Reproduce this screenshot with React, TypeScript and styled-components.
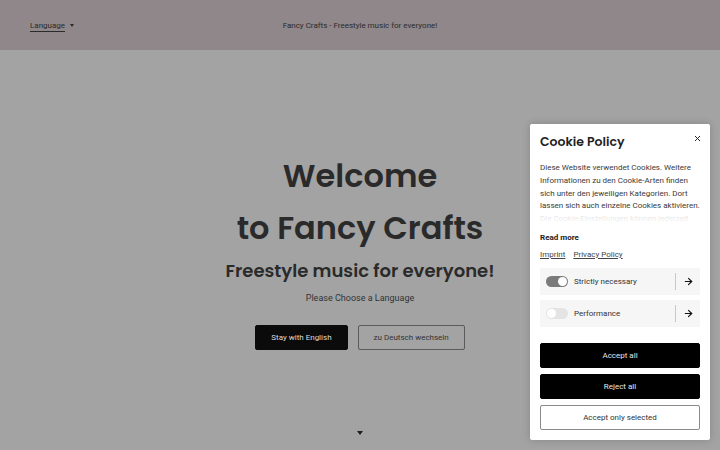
import styled, { createGlobalStyle } from "styled-components";
import { ArrowRight, X } from "lucide-react";

const GlobalStyle = createGlobalStyle`
  html, body {
    margin: 0;
    padding: 0;
    background: #a3a3a3;
    font-family: Roboto, "Liberation Sans", sans-serif;
    color: #2a2a2a;
  }
  * { box-sizing: border-box; }
`;

const Page = styled.div`
  position: relative;
  width: 720px;
  height: 450px;
  overflow: hidden;
  background: #a3a3a3;
`;

const Header = styled.header`
  display: grid;
  grid-template-columns: 1fr auto 1fr;
  align-items: center;
  height: 50px;
  padding: 0 30px;
  background: #8f878a;
  font-size: 8px;
  color: #2b2b2b;
`;

const LangPicker = styled.div`
  display: flex;
  align-items: center;
  gap: 5px;
`;

const LangLabel = styled.span`
  border-bottom: 1px solid #2b2b2b;
  padding-bottom: 1px;
  margin-top: 2px;
`;

const Caret = styled.span`
  width: 0;
  height: 0;
  border-left: 2.5px solid transparent;
  border-right: 2.5px solid transparent;
  border-top: 3px solid #2b2b2b;
`;

const Tagline = styled.div`
  text-align: center;
`;

const Hero = styled.main`
  display: flex;
  flex-direction: column;
  align-items: center;
  padding-top: 100px;
`;

const Title = styled.h1`
  margin: 0;
  font-family: Poppins, Inter, sans-serif;
  font-weight: 600;
  font-size: 32px;
  line-height: 52px;
  color: #2a2a2a;
  text-align: center;
`;

const SubTitle = styled.h2`
  margin: 4px 0 0;
  font-family: Poppins, Inter, sans-serif;
  font-weight: 600;
  font-size: 18px;
  line-height: 26px;
  color: #2a2a2a;
`;

const Prompt = styled.p`
  margin: 7px 0 0;
  font-size: 9px;
  line-height: 14px;
  color: #333;
`;

const ButtonRow = styled.div`
  display: flex;
  gap: 10px;
  margin-top: 20px;
`;

const LangButton = styled.button<{ $dark?: boolean }>`
  height: 25px;
  padding: 0 15px;
  border-radius: 2px;
  font-family: Roboto, sans-serif;
  font-size: 8px;
  background: ${(p) => (p.$dark ? "#0b0b0b" : "transparent")};
  color: ${(p) => (p.$dark ? "#dcdcdc" : "#333")};
  border: 1px solid ${(p) => (p.$dark ? "#0b0b0b" : "#5a5a5a")};
`;

const ScrollHint = styled.span`
  position: absolute;
  left: 357px;
  top: 431px;
  width: 0;
  height: 0;
  border-left: 3.5px solid transparent;
  border-right: 3.5px solid transparent;
  border-top: 4px solid #1e1e1e;
`;

const Modal = styled.aside`
  position: absolute;
  left: 530px;
  top: 124px;
  width: 180px;
  height: 316px;
  padding: 10px 10px;
  background: #fff;
  border-radius: 2px;
  box-shadow: 0 0 8px rgba(0, 0, 0, 0.18);
  display: flex;
  flex-direction: column;
`;

const ModalHead = styled.div`
  display: flex;
  justify-content: space-between;
  align-items: center;
  height: 16px;
`;

const ModalTitle = styled.h3`
  margin: 0;
  font-family: Poppins, Inter, sans-serif;
  font-weight: 600;
  font-size: 12.5px;
  color: #1f1f1f;
`;

const CloseBtn = styled.button`
  display: flex;
  padding: 0;
  margin: -8px -2px 0 0;
  border: none;
  background: none;
  color: #222;
`;

const Description = styled.div`
  position: relative;
  margin-top: 12px;
  height: 63px;
  overflow: hidden;
  font-size: 8px;
  line-height: 12.8px;
  color: #3a3a3a;
  &::after {
    content: "";
    position: absolute;
    left: 0;
    right: 0;
    bottom: 0;
    height: 12px;
    background: linear-gradient(rgba(255, 255, 255, 0.75), #fff);
  }
`;

const ReadMore = styled.div`
  margin-top: 8px;
  font-size: 8px;
  line-height: 12px;
  font-weight: 700;
  color: #222;
`;

const Links = styled.div`
  display: flex;
  gap: 8px;
  margin-top: 5px;
  font-size: 8px;
  line-height: 12px;
  color: #444;
  a {
    color: inherit;
    text-decoration: underline;
  }
`;

const Categories = styled.div`
  display: flex;
  flex-direction: column;
  gap: 5px;
  margin-top: 7px;
`;

const Category = styled.div`
  display: flex;
  align-items: center;
  height: 27px;
  padding: 0 0 0 6px;
  background: #f6f6f6;
`;

const Toggle = styled.span<{ $on?: boolean }>`
  position: relative;
  width: 22px;
  height: 11px;
  border-radius: 6px;
  background: ${(p) => (p.$on ? "#7b7b7b" : "#e4e4e4")};
  &::after {
    content: "";
    position: absolute;
    top: 1px;
    left: ${(p) => (p.$on ? "12px" : "1px")};
    width: 9px;
    height: 9px;
    border-radius: 50%;
    background: #fff;
  }
`;

const CatLabel = styled.span`
  flex: 1;
  margin-left: 6px;
  font-size: 8px;
  color: #333;
`;

const CatArrow = styled.span`
  display: flex;
  align-items: center;
  justify-content: center;
  width: 25px;
  height: 17px;
  border-left: 1px solid #c8c8c8;
  color: #111;
`;

const Actions = styled.div`
  display: flex;
  flex-direction: column;
  gap: 6px;
  margin-top: 16px;
`;

const ActionButton = styled.button<{ $outline?: boolean }>`
  height: 25px;
  border-radius: 2px;
  font-family: Roboto, sans-serif;
  font-size: 8px;
  background: ${(p) => (p.$outline ? "#fff" : "#000")};
  color: ${(p) => (p.$outline ? "#333" : "#e6e6e6")};
  border: 1px solid ${(p) => (p.$outline ? "#8a8a8a" : "#000")};
`;

export default function App() {
  return (
    <Page>
      <GlobalStyle />
      <Header>
        <LangPicker>
          <LangLabel>Language</LangLabel>
          <Caret />
        </LangPicker>
        <Tagline>Fancy Crafts - Freestyle music for everyone!</Tagline>
        <div />
      </Header>
      <Hero>
        <Title>
          Welcome
          <br />
          to Fancy Crafts
        </Title>
        <SubTitle>Freestyle music for everyone!</SubTitle>
        <Prompt>Please Choose a Language</Prompt>
        <ButtonRow>
          <LangButton $dark>Stay with English</LangButton>
          <LangButton>zu Deutsch wechseln</LangButton>
        </ButtonRow>
      </Hero>
      <ScrollHint />
      <Modal>
        <ModalHead>
          <ModalTitle>Cookie Policy</ModalTitle>
          <CloseBtn>
            <X size={9} strokeWidth={2.6} />
          </CloseBtn>
        </ModalHead>
        <Description>
          Diese Website verwendet Cookies. Weitere Informationen zu den
          Cookie-Arten finden sich unter den jeweiligen Kategorien. Dort lassen
          sich auch einzelne Cookies aktivieren. Die Cookie-Einstellungen können
          jederzeit geändert werden.
        </Description>
        <ReadMore>Read more</ReadMore>
        <Links>
          <a>Imprint</a>
          <a>Privacy Policy</a>
        </Links>
        <Categories>
          <Category>
            <Toggle $on />
            <CatLabel>Strictly necessary</CatLabel>
            <CatArrow>
              <ArrowRight size={11} strokeWidth={2.4} />
            </CatArrow>
          </Category>
          <Category>
            <Toggle />
            <CatLabel>Performance</CatLabel>
            <CatArrow>
              <ArrowRight size={11} strokeWidth={2.4} />
            </CatArrow>
          </Category>
        </Categories>
        <Actions>
          <ActionButton>Accept all</ActionButton>
          <ActionButton>Reject all</ActionButton>
          <ActionButton $outline>Accept only selected</ActionButton>
        </Actions>
      </Modal>
    </Page>
  );
}
